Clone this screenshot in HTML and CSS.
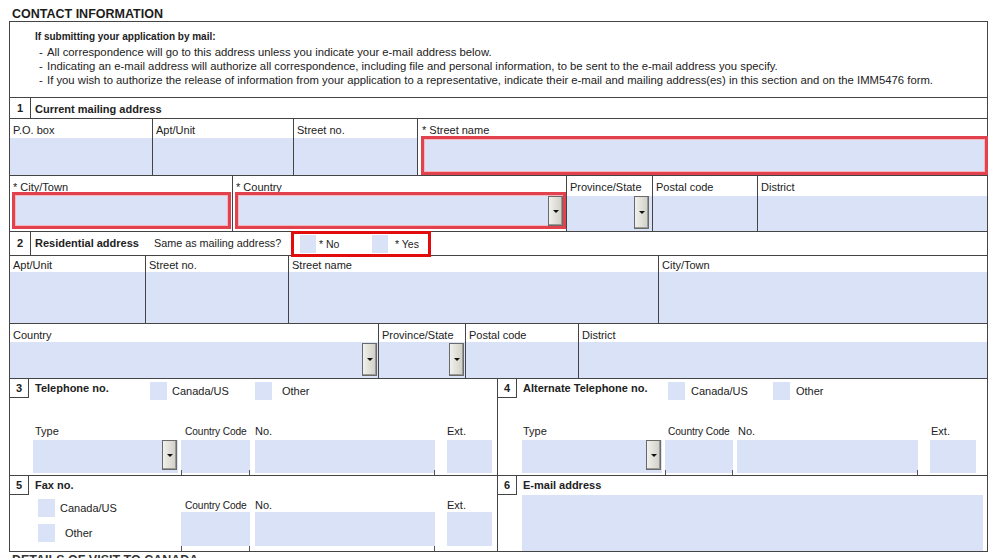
FILE: index.html
```html
<!DOCTYPE html>
<html lang="en">
<head>
<meta charset="utf-8">
<title>Contact information</title>
<link rel="stylesheet" href="styles.css">
</head>
<body>
<div class="page">
  <h1 class="title">CONTACT INFORMATION</h1>
  <div class="form">
    <div class="notice">
      <p class="notice-head">If submitting your application by mail:</p>
      <ul class="notice-list">
        <li>All correspondence will go to this address unless you indicate your e-mail address below.</li>
        <li>Indicating an e-mail address will authorize all correspondence, including file and personal information, to be sent to the e-mail address you specify.</li>
        <li>If you wish to authorize the release of information from your application to a representative, indicate their e-mail and mailing address(es) in this section and on the IMM5476 form.</li>
      </ul>
    </div>

    <div class="sechead sh1">
      <span class="num">1</span>
      <span class="sectitle">Current mailing address</span>
    </div>

    <div class="row r1">
      <div class="cell c-pobox"><span class="lbl">P.O. box</span><div class="inp"></div></div>
      <div class="cell c-apt1"><span class="lbl">Apt/Unit</span><div class="inp"></div></div>
      <div class="cell c-stno1"><span class="lbl">Street no.</span><div class="inp"></div></div>
      <div class="cell grow req-cell"><span class="lbl">* Street name</span><div class="inp req req-street"></div></div>
    </div>

    <div class="row r2">
      <div class="cell c-city1 req-cell"><span class="lbl">* City/Town</span><div class="inp req req-city"></div></div>
      <div class="cell c-country1 req-cell"><span class="lbl">* Country</span><div class="inp req req-country dd"><span class="ddb b-country1"></span></div></div>
      <div class="cell c-prov1"><span class="lbl">Province/State</span><div class="inp dd"><span class="ddb b-prov1"></span></div></div>
      <div class="cell c-postal1"><span class="lbl">Postal code</span><div class="inp"></div></div>
      <div class="cell grow"><span class="lbl">District</span><div class="inp"></div></div>
    </div>

    <div class="sechead sh2">
      <span class="num">2</span>
      <span class="sectitle st2">Residential address</span>
      <span class="same">Same as mailing address?</span>
      <div class="yn">
        <span class="sq ynsq"></span><span class="yn-no">* No</span>
        <span class="sq ynsq"></span><span class="yn-yes">* Yes</span>
      </div>
    </div>

    <div class="row r4">
      <div class="cell c-apt2"><span class="lbl">Apt/Unit</span><div class="inp"></div></div>
      <div class="cell c-stno2"><span class="lbl">Street no.</span><div class="inp"></div></div>
      <div class="cell c-stname2"><span class="lbl">Street name</span><div class="inp"></div></div>
      <div class="cell grow"><span class="lbl">City/Town</span><div class="inp"></div></div>
    </div>

    <div class="row r5">
      <div class="cell c-country2"><span class="lbl">Country</span><div class="inp dd"><span class="ddb b-std"></span></div></div>
      <div class="cell c-prov2"><span class="lbl">Province/State</span><div class="inp dd"><span class="ddb b-std"></span></div></div>
      <div class="cell c-postal2"><span class="lbl">Postal code</span><div class="inp"></div></div>
      <div class="cell grow"><span class="lbl">District</span><div class="inp"></div></div>
    </div>

    <div class="row r6">
      <div class="half left">
        <div class="phead">
          <span class="pnum">3</span>
          <span class="ptitle pt-3">Telephone no.</span>
          <span class="sq hsq"></span><span class="opt opt-l1">Canada/US</span>
          <span class="sq hsq"></span><span class="opt opt-l2">Other</span>
        </div>
        <div class="fields fl-left">
          <div class="fg fg-type-l"><span class="flbl">Type</span><div class="finp dd"><span class="ddb b-type"></span></div></div>
          <div class="fg fg-cc-l tick-l tick-r"><span class="flbl small">Country Code</span><div class="finp"></div></div>
          <div class="fg fg-no-l tick-r"><span class="flbl">No.</span><div class="finp"></div></div>
          <div class="fg fg-ext-l"><span class="flbl">Ext.</span><div class="finp"></div></div>
        </div>
      </div>
      <div class="half right">
        <div class="phead">
          <span class="pnum">4</span>
          <span class="ptitle pt-4">Alternate Telephone no.</span>
          <span class="sq hsq"></span><span class="opt opt-r1">Canada/US</span>
          <span class="sq hsq"></span><span class="opt opt-r2">Other</span>
        </div>
        <div class="fields fl-right">
          <div class="fg fg-type-r"><span class="flbl">Type</span><div class="finp dd"><span class="ddb b-type"></span></div></div>
          <div class="fg fg-cc-r tick-l tick-r"><span class="flbl small">Country Code</span><div class="finp"></div></div>
          <div class="fg fg-no-r tick-r"><span class="flbl">No.</span><div class="finp"></div></div>
          <div class="fg fg-ext-r"><span class="flbl">Ext.</span><div class="finp"></div></div>
        </div>
      </div>
    </div>

    <div class="row r7">
      <div class="half left">
        <div class="phead ph7">
          <span class="pnum">5</span>
          <span class="ptitle">Fax no.</span>
        </div>
        <div class="faxbody">
          <div class="chkcol">
            <div class="chk"><span class="sq csq"></span><span class="chk-ca">Canada/US</span></div>
            <div class="chk chk2"><span class="sq csq"></span><span class="chk-ot">Other</span></div>
          </div>
          <div class="fields fl-fax">
            <div class="fg fg-cc-l tick-l tick-r"><span class="flbl small">Country Code</span><div class="finp"></div></div>
            <div class="fg fg-no-l tick-r"><span class="flbl">No.</span><div class="finp"></div></div>
            <div class="fg fg-ext-l"><span class="flbl">Ext.</span><div class="finp"></div></div>
          </div>
        </div>
      </div>
      <div class="half right">
        <div class="phead ph7">
          <span class="pnum">6</span>
          <span class="ptitle">E-mail address</span>
        </div>
        <div class="email"></div>
      </div>
    </div>
  </div>
  <h2 class="next">DETAILS OF VISIT TO CANADA</h2>
</div>
</body>
</html>
```

FILE: styles.css
```css
* { box-sizing: border-box; }
html, body { margin: 0; padding: 0; background: #fff; overflow: hidden; }
body {
  font-family: "Liberation Sans", Arial, sans-serif;
  font-size: 11px;
  line-height: 13px;
  color: #222;
}
.page { width: 999px; height: 558px; overflow: hidden; }

.title {
  margin: 0;
  height: 21px;
  padding: 8px 0 0 12px;
  font-size: 12.5px;
  line-height: 12px;
  font-weight: bold;
  color: #1c1c1c;
}

.form {
  margin-left: 9px;
  width: 979px;
  border: 1px solid #444;
}

/* notice */
.notice {
  height: 75px;
  padding: 8px 0 0 25px;
  font-size: 11.3px;
  line-height: 14px;
}
.notice-head { margin: 0; font-weight: bold; font-size: 10px; }
.notice-list { list-style: none; margin: 1px 0 0; padding: 0 0 0 4px; }
.notice-list li { display: flex; white-space: nowrap; }
.notice-list li::before { content: "-"; width: 8px; flex: none; }

/* section header rows */
.sechead { display: flex; border-top: 1px solid #444; }
.sh1 { height: 21px; }
.sh2 { height: 24px; align-items: center; }
.num {
  flex: none;
  width: 21px;
  align-self: stretch;
  border-right: 1px solid #444;
  display: flex;
  align-items: center;
  justify-content: center;
  font-weight: bold;
}
.sectitle { font-weight: bold; margin-left: 4px; align-self: center; padding-top: 2px; white-space: nowrap; }
.st2 { width: 119px; flex: none; padding-top: 0; }
.same { width: 137px; flex: none; white-space: nowrap; font-size: 10.8px; }
.yn {
  display: flex;
  align-items: center;
  flex: none;
  width: 140px;
  align-self: stretch;
  margin: -1px 0 -2px 0;
  padding-left: 6px;
  border: 3px solid #e30c0c;
  font-size: 10.5px;
}
.ynsq { width: 16px; height: 18px; }
.yn-no { margin-left: 3px; width: 53px; }
.yn-yes { margin-left: 7px; }

/* generic rows / cells */
.row { display: flex; border-top: 1px solid #444; }
.r1 { height: 57px; }
.r2 { height: 56px; }
.r4 { height: 68px; }
.r5 { height: 55px; }
.r6 { height: 97px; }
.r7 { height: 76px; }

.cell { display: flex; flex-direction: column; flex: none; }
.cell + .cell { border-left: 1px solid #444; }
.cell.grow { flex: 1; }
.lbl { flex: none; padding: 0 3px; white-space: nowrap; }
.inp { flex: 1; background: #dae2f8; }

.r1 .lbl { height: 19px; padding-top: 5px; }
.r1 .req-cell .lbl { height: 17px; padding-left: 4px; }
.r2 .lbl { height: 20px; padding-top: 5px; }
.r2 .req-cell .lbl { height: 16px; }
.r4 .lbl { height: 16px; padding-top: 3px; }
.r5 .lbl { height: 18px; padding-top: 5px; }

.c-pobox { width: 142px; }
.c-apt1 { width: 141px; }
.c-stno1 { width: 124px; }
.c-city1 { width: 222px; }
.c-country1 { width: 334px; }
.c-prov1 { width: 86px; }
.c-postal1 { width: 105px; }
.c-apt2 { width: 135px; }
.c-stno2 { width: 143px; }
.c-stname2 { width: 370px; }
.c-country2 { width: 368px; }
.c-prov2 { width: 87px; }
.c-postal2 { width: 113px; }

/* required (red) inputs */
.req {
  border: 3px solid #e2414e;
  box-shadow: inset 0 0 0 1px #f5b7bd;
}
.req-street { margin: 0 -1px 0 3px; }
.req-city { margin: 0 1px 2px 2px; }
.req-country { margin: 0 0 2px 2px; }

/* dropdown buttons */
.dd { display: flex; justify-content: flex-end; }
.ddb {
  width: 15px;
  flex: none;
  background: linear-gradient(to right, #f1f1ec, #cfcfc6);
  border: 1px solid #6a6a6a;
  box-shadow: inset -1px -1px 0 #9a9a94;
  display: flex;
  align-items: center;
  justify-content: center;
}
.ddb::after {
  content: "";
  border-left: 3px solid transparent;
  border-right: 3px solid transparent;
  border-top: 3px solid #111;
}
.b-country1 { margin: 1px 0 0 0; }
.b-prov1 { margin: 0 3px 2px 0; }
.b-std { margin: 1px 1px 2px 0; }
.b-type { margin: 0 1px 3px 0; }

/* small squares */
.sq { display: block; flex: none; background: #dae2f8; }

/* halves */
.half { display: flex; flex-direction: column; }
.half.left { width: 487px; flex: none; }
.half.right { flex: 1; border-left: 1px solid #444; }

.phead { display: flex; align-items: flex-start; height: 22px; flex: none; }
.ph7 { height: 19px; }
.pnum {
  flex: none;
  width: 19px;
  height: 19px;
  border-right: 1px solid #444;
  border-bottom: 1px solid #444;
  display: flex;
  align-items: center;
  justify-content: center;
  font-weight: bold;
}
.ptitle { font-weight: bold; margin-left: 6px; padding-top: 3px; white-space: nowrap; }
.pt-3 { width: 115px; flex: none; }
.pt-4 { width: 145px; flex: none; }
.hsq { width: 17px; height: 18px; margin-top: 3px; }
.opt { padding-top: 6px; flex: none; }
.opt-l1 { margin-left: 5px; width: 83px; }
.opt-l2 { margin-left: 10px; }
.opt-r1 { margin-left: 6px; width: 82px; }
.opt-r2 { margin-left: 6px; }

/* phone fields */
.fields { display: flex; align-items: flex-end; }
.fl-left { margin-top: 24px; padding-left: 23px; }
.fl-right { margin-top: 24px; padding-left: 24px; }
.fg { display: flex; flex-direction: column; flex: none; position: relative; }
.flbl { height: 13px; margin-bottom: 2px; white-space: nowrap; }
.flbl.small { font-size: 10.2px; letter-spacing: -0.1px; }
.finp { height: 33px; background: #dae2f8; }

.fg-type-l { width: 145px; }
.fg-type-l .flbl { padding-left: 2px; }
.fg-cc-l { width: 69px; margin-left: 3px; }
.fg-cc-l .flbl { padding-left: 4px; }
.fg-no-l { width: 180px; margin-left: 5px; }
.fg-ext-l { width: 45px; margin-left: 12px; }

.fg-type-r { width: 140px; }
.fg-type-r .flbl { padding-left: 1px; }
.fg-cc-r { width: 68px; margin-left: 3px; }
.fg-cc-r .flbl { padding-left: 3px; }
.fg-no-r { width: 181px; margin-left: 4px; }
.fg-no-r .flbl { padding-left: 1px; }
.fg-ext-r { width: 46px; margin-left: 12px; }
.fg-ext-r .flbl { padding-left: 1px; }

.tick-l::before, .tick-r::after {
  content: "";
  position: absolute;
  bottom: -2px;
  width: 1px;
  height: 5px;
  background: #555;
}
.tick-l::before { left: 0; }
.tick-r::after { right: 0; }

/* fax */
.faxbody { display: flex; flex: 1; }
.chkcol { width: 171px; flex: none; padding-left: 28px; }
.chk { display: flex; align-items: center; margin-top: 4px; }
.chk2 { margin-top: 7px; }
.csq { width: 17px; height: 18px; }
.chk-ca { margin-left: 5px; }
.chk-ot { margin-left: 10px; }
.fl-fax { margin-top: 4px; align-items: flex-start; }
.fl-fax .flbl { margin-bottom: 0; }
.fl-fax .finp { height: 34px; }
.fl-fax .fg-cc-l { margin-left: 0; }
.fl-fax .tick-l::before, .fl-fax .tick-r::after { bottom: -5px; height: 5px; }

.email { flex: 1; margin: 0 4px 0 24px; background: #dae2f8; }

.next {
  margin: 0;
  padding: 2px 0 0 12px;
  font-size: 12.5px;
  line-height: 12px;
  font-weight: bold;
  color: #333;
}
```
